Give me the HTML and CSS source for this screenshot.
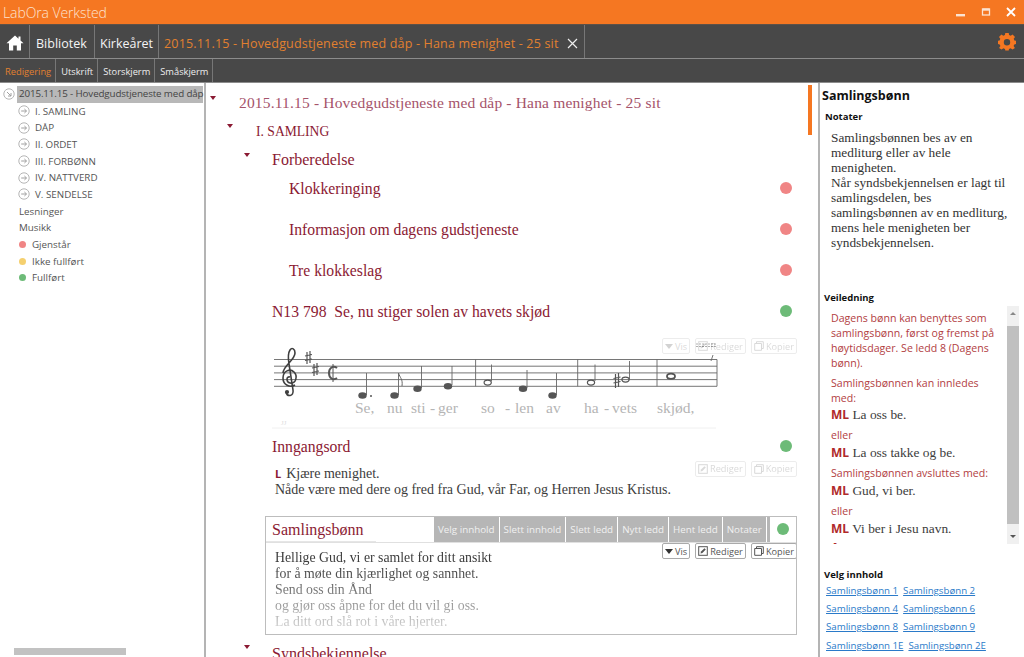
FILE: index.html
```html
<!DOCTYPE html>
<html>
<head>
  <title>LabOra Verksted</title>
  <link rel="stylesheet" href="styles.css">
</head>
<body>
  <svg class="defs" width="0" height="0">
    <symbol id="arrow-right" viewBox="0 0 12 12">
      <circle cx="6" cy="6" r="5.2" fill="none" stroke="#b5b5b5"/>
      <path d="M3.2 6H8.4M6.4 4L8.5 6L6.4 8" fill="none" stroke="#a0a0a0"/>
    </symbol>
    <symbol id="arrow-open" viewBox="0 0 12 12">
      <circle cx="6" cy="6" r="5.2" fill="none" stroke="#b5b5b5"/>
      <path d="M4 4L8 8M8 5V8H5" fill="none" stroke="#a0a0a0"/>
    </symbol>
    <symbol id="icon-edit" viewBox="0 0 10 10">
      <rect x="0.7" y="0.7" width="8.6" height="8.6" fill="none" stroke="currentColor"/>
      <path d="M2.5 7.5L3 5.5L6.5 2.2L7.8 3.5L4.4 7Z" fill="currentColor"/>
    </symbol>
    <symbol id="icon-copy" viewBox="0 0 10 10">
      <path d="M2.5 2.5V0.7H9.3V7.5H7.5M0.7 2.5H7.5V9.3H0.7Z" fill="none" stroke="currentColor"/>
    </symbol>
  </svg>

  <div class="titlebar">
    <span class="app-name">LabOra Verksted</span>
    <div class="window-controls">
      <svg width="12" height="12" viewBox="0 0 12 12"><rect x="1" y="8" width="9" height="2.4" fill="#fbe3d2"/></svg>
      <svg width="12" height="12" viewBox="0 0 12 12"><rect x="2.5" y="3" width="7" height="6" fill="none" stroke="#fbe3d2" stroke-width="1.3"/><rect x="2.5" y="2.5" width="7" height="2.2" fill="#fbe3d2"/></svg>
      <svg width="12" height="12" viewBox="0 0 12 12"><path d="M2 2L10 10M10 2L2 10" stroke="#fff" stroke-width="1.8"/></svg>
    </div>
  </div>

  <div class="navbar">
    <a class="nav-home">
      <svg width="18" height="16" viewBox="0 0 18 16"><path d="M9 0.5L0.5 8.2H3V15.5H7.2V10.5H10.8V15.5H15V8.2H17.5L14.5 5.5V1.5H12.5V3.7Z" fill="#fff"/></svg>
    </a>
    <a class="nav-item bib">Bibliotek</a>
    <a class="nav-item kirke">Kirkeåret</a>
    <a class="nav-tab">2015.11.15 - Hovedgudstjeneste med dåp - Hana menighet - 25 sit
      <svg width="11" height="11" viewBox="0 0 11 11"><path d="M1 1L10 10M10 1L1 10" stroke="#eee" stroke-width="1.2"/></svg>
    </a>
    <svg class="gear" width="18" height="18" viewBox="0 0 18 18">
      <path fill="#f57722" fill-rule="evenodd" d="M7.3 0.5H10.7L11.1 2.7L12.7 3.4L14.6 2.1L17 4.5L15.7 6.4L16.4 8L18 8.3V11.7L16.3 12L15.6 13.6L16.9 15.5L14.5 17.2L12.6 15.9L11 16.6L10.7 18H7.3L7 16.6L5.4 15.9L3.5 17.2L1.1 15.5L2.4 13.6L1.7 12L0 11.7V8.3L1.6 8L2.3 6.4L1 4.5L3.4 2.1L5.3 3.4L6.9 2.7ZM9 6.6A3.2 3.2 0 1 0 9 13A3.2 3.2 0 1 0 9 6.6Z" transform="translate(0 -0.6)"/>
    </svg>
  </div>

  <div class="subnav">
    <a class="sub-item active">Redigering</a>
    <a class="sub-item">Utskrift</a>
    <a class="sub-item">Storskjerm</a>
    <a class="sub-item">Småskjerm</a>
  </div>

  <div class="workspace">
    <div class="tree">
      <div class="tree-row root">
        <svg class="tree-icon"><use href="#arrow-open"/></svg>
        <span class="selected">2015.11.15 - Hovedgudstjeneste med dåp</span>
      </div>
      <div class="tree-row child"><svg class="tree-icon"><use href="#arrow-right"/></svg>I. SAMLING</div>
      <div class="tree-row child"><svg class="tree-icon"><use href="#arrow-right"/></svg>DÅP</div>
      <div class="tree-row child"><svg class="tree-icon"><use href="#arrow-right"/></svg>II. ORDET</div>
      <div class="tree-row child"><svg class="tree-icon"><use href="#arrow-right"/></svg>III. FORBØNN</div>
      <div class="tree-row child"><svg class="tree-icon"><use href="#arrow-right"/></svg>IV. NATTVERD</div>
      <div class="tree-row child"><svg class="tree-icon"><use href="#arrow-right"/></svg>V. SENDELSE</div>
      <div class="tree-row plain">Lesninger</div>
      <div class="tree-row plain">Musikk</div>
      <div class="tree-row status"><i class="mini red"></i>Gjenstår</div>
      <div class="tree-row status"><i class="mini yellow"></i>Ikke fullført</div>
      <div class="tree-row status"><i class="mini green"></i>Fullført</div>
      <div class="tree-scroll"><div class="tree-thumb"></div></div>
    </div>

    <div class="main">
      <div class="orange-thumb"></div>

      <div class="head level0"><i class="caret"></i>2015.11.15 - Hovedgudstjeneste med dåp - Hana menighet - 25 sit</div>
      <div class="head level1"><i class="caret"></i>I. SAMLING</div>
      <div class="head level2"><i class="caret"></i>Forberedelse</div>

      <div class="item level3"><span>Klokkeringing</span><i class="dot red"></i></div>
      <div class="item level3"><span>Informasjon om dagens gudstjeneste</span><i class="dot red"></i></div>
      <div class="item level3"><span>Tre klokkeslag</span><i class="dot red"></i></div>
      <div class="item level2b"><span>N13 798&nbsp; Se, nu stiger solen av havets skjød</span><i class="dot green"></i></div>

      <div class="music">
        <svg width="446" height="90" viewBox="272 340 446 90">
          <g stroke="#666" stroke-width="0.9">
            <path d="M274 359.5H717M274 366.2H717M274 372.9H717M274 379.6H717M274 386.3H717" fill="none"/>
            <path d="M475.6 359.5V386.3M577.7 359.5V386.3M657 359.5V386.3M717 359.5V386.3" fill="none"/>
            <path d="M366.5 373V395M398.5 373V395M421.5 366V388M452 366V385M491.5 364.5V381M527 370V388M556.5 373V395M595 364.5V381M629.5 361V379M711 361L713 355" fill="none"/>
          </g>
          <path d="M398.5 373C400 378 403 379 402 386" fill="none" stroke="#666"/>
          <g fill="none" stroke="#3f3f3f" stroke-width="1.6">
            <path d="M290 377C286 376 286 382 290 383C296 384 298 376 294 372C290 368 283 371 283 378C283 385 290 388 295 385"/>
            <path d="M283 373C283 366 295 360 295 353C295 349 292 347 290 350C288 353 288 358 289 364L293 390C294 397 287 397 286 392"/>
          </g>
          <circle cx="287" cy="392" r="2.1" fill="#3f3f3f"/>
          <g fill="#555">
            <ellipse cx="362.5" cy="395.5" rx="4.2" ry="3.2"/>
            <circle cx="371" cy="396" r="1"/>
            <ellipse cx="394.5" cy="395.5" rx="4.2" ry="3.2"/>
            <ellipse cx="417.5" cy="388.8" rx="4.2" ry="3.2"/>
            <ellipse cx="448" cy="386.3" rx="4.2" ry="3.2"/>
            <ellipse cx="523" cy="388.8" rx="4.2" ry="3.2"/>
            <ellipse cx="552.5" cy="395.5" rx="4.2" ry="3.2"/>
          </g>
          <g fill="none" stroke="#555" stroke-width="1.2">
            <ellipse cx="487.7" cy="382.6" rx="3.6" ry="2.5"/>
            <ellipse cx="591" cy="382.6" rx="3.6" ry="2.5"/>
            <ellipse cx="625.5" cy="379.6" rx="3.6" ry="2.5"/>
            <ellipse cx="671" cy="376.2" rx="4" ry="2.6" stroke-width="1.8"/>
            <path d="M307 352V364M310 351V363M305 356L312 354.5M305 360.5L312 359M314 364V376M317 363V375M312 368L319 366.5M312 372.5L319 371M615.5 374V388M618.5 373V387M613.5 378.5L620.5 377M613.5 383L620.5 381.5"/>
            <path d="M337 368C333 365 329 368 329 373C329 378 333 381 337 378" stroke-width="2"/>
            <path d="M333 364V382" stroke-width="1"/>
          </g>
          <g class="lyrics">
            <text x="355" y="413">Se,</text>
            <text x="387" y="413">nu</text>
            <text x="411" y="413">sti</text>
            <text x="430" y="413">-</text>
            <text x="438" y="413">ger</text>
            <text x="481" y="413">so</text>
            <text x="505" y="413">-</text>
            <text x="515" y="413">len</text>
            <text x="546" y="413">av</text>
            <text x="584" y="413">ha</text>
            <text x="604" y="413">-</text>
            <text x="612" y="413">vets</text>
            <text x="657" y="413">skjød,</text>
          </g>
          <path d="M272 428H716" stroke="#f0f0f0"/>
          <path d="M696 344H716M696 346.5H716" stroke="#9a9a9a" stroke-dasharray="2 1"/>
          <text class="tiny" x="281" y="425">JJ</text>
        </svg>
        <div class="actions faded music-actions">
          <a class="btn"><i class="tri"></i>Vis</a>
          <a class="btn"><svg><use href="#icon-edit"/></svg>Rediger</a>
          <a class="btn"><svg><use href="#icon-copy"/></svg>Kopier</a>
        </div>
      </div>

      <div class="item level2b entry"><span>Inngangsord</span><i class="dot green"></i></div>
      <div class="liturgy">
        <p><b>L</b>&nbsp; Kjære menighet.<br>Nåde være med dere og fred fra Gud, vår Far, og Herren Jesus Kristus.</p>
        <div class="actions faded liturgy-actions">
          <a class="btn"><svg><use href="#icon-edit"/></svg>Rediger</a>
          <a class="btn"><svg><use href="#icon-copy"/></svg>Kopier</a>
        </div>
      </div>

      <div class="box">
        <div class="box-head">
          <div class="box-title">Samlingsbønn</div>
          <div class="toolbar">
            <a>Velg innhold</a><a>Slett innhold</a><a>Slett ledd</a><a>Nytt ledd</a><a>Hent ledd</a><a>Notater</a>
          </div>
          <div class="box-dot"><i class="dot green"></i></div>
        </div>
        <div class="box-body">
          <div class="actions box-actions">
            <a class="btn"><i class="tri"></i>Vis</a>
            <a class="btn"><svg><use href="#icon-edit"/></svg>Rediger</a>
            <a class="btn"><svg><use href="#icon-copy"/></svg>Kopier</a>
          </div>
          <p>Hellige Gud, vi er samlet for ditt ansikt<br>for å møte din kjærlighet og sannhet.<br>Send oss din Ånd<br>og gjør oss åpne for det du vil gi oss.<br>La ditt ord slå rot i våre hjerter.</p>
        </div>
      </div>

      <div class="head level2 last"><i class="caret"></i>Syndsbekjennelse</div>
    </div>

    <div class="side">
      <h3>Samlingsbønn</h3>
      <h4 class="notes-title">Notater</h4>
      <p class="notes">Samlingsbønnen bes av en medliturg eller av hele menigheten.<br>Når syndsbekjennelsen er lagt til samlingsdelen, bes samlingsbønnen av en medliturg, mens hele menigheten ber syndsbekjennelsen.</p>
      <h4 class="guide-title">Veiledning</h4>
      <div class="guide">
        <div class="guide-text">
          <p class="intro">Dagens bønn kan benyttes som samlingsbønn, først og fremst på høytidsdager. Se ledd 8 (Dagens bønn).</p>
          <p class="lead">Samlingsbønnen kan innledes med:</p>
          <p class="line"><b>ML</b> La oss be.</p>
          <p>eller</p>
          <p class="line"><b>ML</b> La oss takke og be.</p>
          <p>Samlingsbønnen avsluttes med:</p>
          <p class="line"><b>ML</b> Gud, vi ber.</p>
          <p>eller</p>
          <p class="line"><b>ML</b> Vi ber i Jesu navn.</p>
          <p class="line"><b>A</b> Amen.</p>
        </div>
        <div class="guide-scroll"><span class="up"></span><div class="guide-thumb"></div><span class="down"></span></div>
      </div>
      <h4 class="pick-title">Velg innhold</h4>
      <div class="links">
        <div><a>Samlingsbønn 1</a><a>Samlingsbønn 2</a></div>
        <div><a>Samlingsbønn 4</a><a>Samlingsbønn 6</a></div>
        <div><a>Samlingsbønn 8</a><a>Samlingsbønn 9</a></div>
        <div><a>Samlingsbønn 1E</a><a>Samlingsbønn 2E</a></div>
      </div>
    </div>
  </div>
</body>
</html>
```

FILE: styles.css
```css
* {
  box-sizing: border-box;
}

html, body {
  margin: 0;
  padding: 0;
  height: 657px;
  overflow: hidden;
}

body {
  display: flex;
  flex-direction: column;
  font-family: "Open Sans", "Noto Sans", sans-serif;
  background-color: #ffffff;
  color: #444444;
}

.defs {
  position: absolute;
}

p, h3, h4 {
  margin: 0;
}

/* top bars */
.titlebar {
  height: 24px;
  flex: none;
  display: flex;
  align-items: center;
  justify-content: space-between;
  padding-left: 3px;
  background-color: #f57722;
}

.app-name {
  font-size: 14px;
  font-weight: 300;
  letter-spacing: -0.1px;
  color: #fde3d0;
}

.window-controls {
  display: flex;
  gap: 13px;
  padding-right: 7px;
}

.navbar {
  height: 35px;
  flex: none;
  display: flex;
  align-items: stretch;
  background-color: #484848;
  border-top: 1px solid #5c5148;
  border-bottom: 1px solid #8c8c8c;
  color: #ffffff;
}

.nav-home {
  width: 30px;
  display: flex;
  align-items: center;
  justify-content: center;
  padding-top: 2px;
  border-right: 1px solid #777777;
}

.nav-item {
  display: flex;
  align-items: center;
  padding-top: 4px;
  font-size: 12.5px;
  color: #f4f4f4;
  border-right: 1px solid #777777;
}

.bib {
  width: 65px;
  padding-left: 6px;
}

.kirke {
  width: 64px;
  padding-left: 5px;
}

.nav-tab {
  width: 426px;
  display: flex;
  align-items: center;
  justify-content: space-between;
  padding: 4px 6px 0 5px;
  font-size: 12.5px;
  letter-spacing: 0.18px;
  color: #e2802f;
  border-right: 1px solid #777777;
}

.gear {
  margin: 8px 8px 0 auto;
}

.subnav {
  height: 24px;
  flex: none;
  display: flex;
  background-color: #484848;
  border-bottom: 1px solid #8c8c8c;
}

.sub-item {
  display: flex;
  align-items: center;
  padding: 2px 4px 0 5px;
  font-size: 9.3px;
  color: #eeeeee;
  border-right: 1px solid #777777;
}

.sub-item.active {
  color: #e2802f;
}

.workspace {
  flex: 1;
  display: flex;
  min-height: 0;
}

/* left tree */
.tree {
  position: relative;
  width: 206px;
  flex: none;
  padding-top: 3px;
  border-right: 2px solid #b4b4b4;
  font-size: 9.8px;
  color: #555555;
}

.tree-row {
  height: 16.7px;
  display: flex;
  align-items: center;
  white-space: nowrap;
}

.tree-icon {
  width: 12px;
  height: 12px;
  flex: none;
}

.root {
  padding-left: 3px;
}

.selected {
  width: 186px;
  height: 16.7px;
  margin-left: 2px;
  padding-left: 2px;
  line-height: 16px;
  letter-spacing: -0.13px;
  background-color: #b8b8b8;
  color: #444444;
}

.child {
  padding-left: 18px;
}

.child .tree-icon {
  margin-right: 5px;
}

.plain {
  padding-left: 19px;
}

.status {
  padding-left: 19px;
}

.mini {
  width: 7px;
  height: 7px;
  margin-right: 6px;
  border-radius: 50%;
}

.tree-scroll {
  position: absolute;
  left: 0;
  right: 0;
  bottom: 2px;
  height: 7px;
  padding-left: 14px;
}

.tree-thumb {
  width: 112px;
  height: 7px;
  background-color: #c2c2c2;
}

/* main column */
.main {
  position: relative;
  width: 612px;
  flex: none;
  padding-top: 10px;
  overflow: hidden;
  font-family: "Liberation Serif", serif;
  color: #8b1a33;
}

.orange-thumb {
  position: absolute;
  left: 602px;
  top: 2px;
  width: 4px;
  height: 50px;
  background-color: #f57722;
}

.head {
  position: relative;
  height: 29px;
  line-height: 20px;
  white-space: nowrap;
}

.caret {
  position: absolute;
  top: 3px;
  width: 0;
  height: 0;
  border-left: 3.5px solid transparent;
  border-right: 3.5px solid transparent;
  border-top: 4px solid #8b1a33;
}

.level0 {
  height: 28px;
  padding-left: 33px;
  font-size: 15.5px;
  letter-spacing: 0.17px;
  color: #a5536a;
}

.level0 .caret {
  left: 4px;
}

.level1 {
  padding: 1px 0 0 50px;
  font-size: 13.6px;
}

.level1 .caret {
  left: 21px;
}

.level2 {
  padding-left: 66px;
  font-size: 16px;
  height: 18px;
}

.level2 .caret {
  left: 38px;
}

.item {
  display: flex;
  align-items: center;
  justify-content: space-between;
  height: 41px;
  padding-right: 26px;
  font-size: 15.7px;
}

.level3 {
  padding-left: 83px;
}

.level2b {
  padding-left: 66px;
}

.dot {
  display: block;
  width: 12px;
  height: 12px;
  margin-top: -2px;
  border-radius: 50%;
}

.red {
  background-color: #f08585;
}

.green {
  background-color: #6dbb78;
}

.yellow {
  background-color: #f5d06f;
}

/* music */
.music {
  position: relative;
  height: 88px;
  margin-top: 8px;
  padding-left: 66px;
}

.music svg {
  display: block;
}

.lyrics text {
  font-size: 15.5px;
  fill: #b5b5b5;
}

.tiny {
  font-size: 7px;
  fill: #dddddd;
}

.actions {
  display: flex;
  gap: 5px;
}

.btn {
  display: flex;
  align-items: center;
  height: 16px;
  padding: 0 2px;
  background-color: #ffffff;
  border: 1px solid #aaaaaa;
  border-radius: 2px;
  font-family: "Open Sans", sans-serif;
  font-size: 9.2px;
  color: #555555;
}

.btn svg {
  width: 10px;
  height: 10px;
  margin-right: 2px;
  flex: none;
}

.tri {
  width: 0;
  height: 0;
  margin-right: 2px;
  border-left: 4px solid transparent;
  border-right: 4px solid transparent;
  border-top: 5px solid #333333;
}

.faded {
  opacity: 0.22;
}

.music-actions {
  position: absolute;
  top: -2px;
  left: 456px;
}

.entry {
  height: 38px;
  margin-top: 0;
}

.liturgy {
  position: relative;
  height: 50px;
  padding: 0 0 0 69px;
  font-size: 14px;
  line-height: 16px;
  color: #3c3c3c;
  white-space: nowrap;
}

.liturgy b {
  margin-right: -2px;
  font-family: "Open Sans", sans-serif;
  font-size: 11px;
  color: #8b1a33;
}

.liturgy-actions {
  position: absolute;
  top: -5px;
  left: 489px;
}

.box {
  width: 532px;
  height: 119px;
  margin-left: 59px;
  border: 1px solid #bdbdbd;
  overflow: hidden;
}

.box-head {
  display: flex;
  height: 25px;
}

.box-title {
  width: 168px;
  padding: 3px 0 0 6px;
  font-size: 16px;
  line-height: 20px;
  background: linear-gradient(#e6e6e6, #e6e6e6) no-repeat 0 100% / 110px 1px;
}

.toolbar {
  width: 336px;
  display: flex;
  background-color: #b6b6b6;
}

.toolbar a {
  display: flex;
  align-items: center;
  padding: 0 4px;
  font-family: "Open Sans", sans-serif;
  font-size: 9.8px;
  color: #f1f1f1;
  border-right: 1px solid #ffffff;
  white-space: nowrap;
}

.box-dot {
  flex: 1;
  display: flex;
  align-items: center;
  justify-content: center;
}

.box-body {
  position: relative;
  padding: 7px 9px;
  border-top: 1px solid #e0e0e0;
}

.box-body p {
  font-size: 13.8px;
  line-height: 16px;
  color: #3c3c3c;
  -webkit-mask-image: linear-gradient(#000 20%, rgba(0,0,0,0.2) 100%);
  mask-image: linear-gradient(#000 20%, rgba(0,0,0,0.2) 100%);
}

.box-actions {
  position: absolute;
  top: 0;
  left: 396px;
}

.last {
  margin-top: 9px;
}

.last .caret {
  top: 1px;
}

/* right panel */
.side {
  flex: 1;
  min-width: 0;
  border-left: 2px solid #b4b4b4;
  overflow: hidden;
  color: #222222;
}

.side h3 {
  padding: 4px 0 0 2px;
  font-size: 12.5px;
  line-height: 18px;
  color: #111111;
}

.side h4 {
  font-size: 9.5px;
  line-height: 14px;
  color: #111111;
}

.notes-title {
  margin: 5px 0 0 5px;
}

.notes {
  width: 182px;
  height: 161px;
  margin: 6px 0 0 11px;
  font-family: "Liberation Serif", serif;
  font-size: 13.3px;
  line-height: 15px;
  color: #333333;
}

.guide-title {
  margin-left: 4px;
}

.guide {
  display: flex;
  height: 238px;
  margin: 1px 0 0 4px;
  overflow: hidden;
}

.guide-text {
  width: 183px;
  padding: 5px 12px 0 7px;
  font-size: 10.6px;
  line-height: 15px;
  color: #b2403f;
}

.guide-text p {
  margin-bottom: 4px;
}

.guide-text .intro {
  margin-bottom: 5px;
}

.guide-text .lead {
  margin-bottom: 3px;
}

.guide-text .line {
  height: 15px;
  font-family: "Liberation Serif", serif;
  font-size: 13.4px;
  line-height: 15px;
  color: #3c3c3c;
  margin-top: -2px;
  margin-bottom: 6px;
}

.guide-text b {
  font-family: "Open Sans", sans-serif;
  font-size: 12px;
  line-height: 1;
  color: #b02a2a;
}

.guide-scroll {
  width: 12px;
  margin-left: 0;
  display: flex;
  flex-direction: column;
  justify-content: space-between;
  align-items: center;
  background-color: #f0f0f0;
}

.guide-thumb {
  width: 12px;
  height: 198px;
  background-color: #c0c0c0;
}

.up, .down {
  width: 0;
  height: 0;
  margin: 6px 0;
  border-left: 3px solid transparent;
  border-right: 3px solid transparent;
}

.up {
  border-bottom: 3px solid #888888;
}

.down {
  border-top: 3px solid #555555;
}

.pick-title {
  margin: 24px 0 0 4px;
}

.links {
  margin: -1px 0 0 6px;
  font-size: 9.7px;
}

.links div {
  display: flex;
  gap: 5px;
  height: 18.4px;
  align-items: center;
}

.links a {
  color: #2a7ac9;
  text-decoration: underline;
  white-space: nowrap;
}
```
